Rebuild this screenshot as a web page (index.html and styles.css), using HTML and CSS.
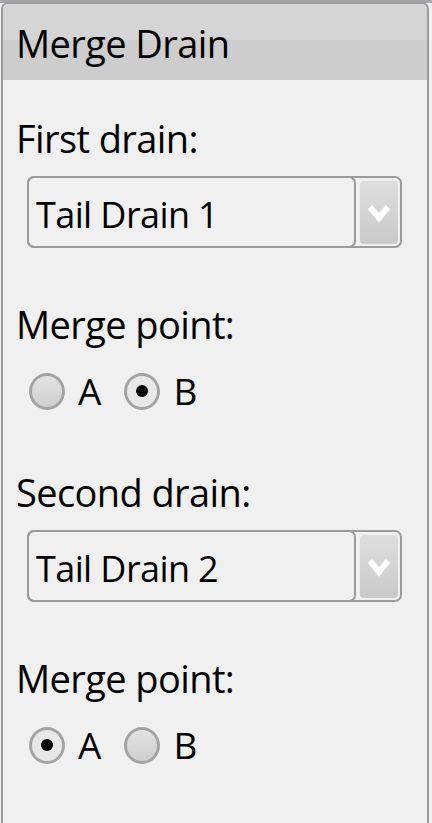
FILE: index.html
```html
<!DOCTYPE html>
<html>
<head>
<meta charset="utf-8">
<link rel="stylesheet" href="styles.css">
</head>
<body>
<div class="topbar"></div>
<div class="panel">
  <div class="header">Merge Drain</div>
  <div class="content">
    <div class="group">
      <div class="label">First drain:</div>
      <div class="combo">
        <div class="field">Tail Drain 1</div>
        <div class="drop"><svg class="chev" viewBox="0 0 24 20"><path d="M3 4 L12 15 L21 4" fill="none" stroke="#ffffff" stroke-width="6"/></svg></div>
      </div>
      <div class="label label-merge">Merge point:</div>
      <div class="radios">
        <div class="radio"><span class="dot"></span><span class="rlabel">A</span></div>
        <div class="radio checked"><span class="dot"></span><span class="rlabel">B</span></div>
      </div>
    </div>
    <div class="group group-second">
      <div class="label">Second drain:</div>
      <div class="combo">
        <div class="field">Tail Drain 2</div>
        <div class="drop"><svg class="chev" viewBox="0 0 24 20"><path d="M3 4 L12 15 L21 4" fill="none" stroke="#ffffff" stroke-width="6"/></svg></div>
      </div>
      <div class="label label-merge">Merge point:</div>
      <div class="radios">
        <div class="radio checked"><span class="dot"></span><span class="rlabel">A</span></div>
        <div class="radio"><span class="dot"></span><span class="rlabel">B</span></div>
      </div>
    </div>
  </div>
</div>
</body>
</html>
```
FILE: styles.css
```css
html, body {
  margin: 0;
  padding: 0;
}
body {
  background: #f0f0f0;
  font-family: "Open Sans", "Noto Sans", sans-serif;
  color: #000;
  width: 432px;
  height: 823px;
  overflow: hidden;
}
.topbar {
  height: 3px;
  background: #a1a7ad;
}
.panel {
  margin: -1px 3px 0 1px;
  height: 830px;
  border: 2px solid #9a9a9a;
  border-bottom: none;
  border-radius: 7px 7px 0 0;
  background: #f0f0f0;
  box-sizing: border-box;
}
.header {
  height: 76px;
  box-sizing: border-box;
  padding: 3px 0 0 13px;
  background: linear-gradient(#d5d5d5 0, #d5d5d5 48%, #cdcdcd 48%, #cdcdcd 100%);
  border-radius: 5px 5px 0 0;
  font-size: 38px;
  line-height: 73px;
  letter-spacing: -0.6px;
}
.content {
  padding: 0 25px 0 13px;
}
.group {
  display: flex;
  flex-direction: column;
}
.group-second {
  margin-top: 23px;
}
.label {
  font-size: 38px;
  letter-spacing: -0.6px;
  line-height: 52px;
  margin-top: 32px;
}
.label-merge {
  margin-top: 50px;
}
.combo {
  margin: 12px 0 0 11px;
  display: flex;
  height: 72px;
  box-sizing: border-box;
  border: 2px solid #9b9b9b;
  border-radius: 7px;
}
.field {
  flex: 1;
  margin: -2px 0 -2px -2px;
  border: 2px solid #9b9b9b;
  border-radius: 7px;
  font-size: 36px;
  letter-spacing: -0.6px;
  line-height: 60px;
  padding: 7px 0 0 7px;
  box-sizing: border-box;
}
.drop {
  flex: none;
  width: 38px;
  margin: 3px 2px 2px 4px;
  border-radius: 4px;
  background: linear-gradient(#dedede, #c9c9c9);
  display: flex;
  align-items: center;
  justify-content: center;
}
.chev {
  flex: none;
  width: 24px;
  height: 20px;
  display: block;
}
.radios {
  display: flex;
  gap: 23px;
  margin: 21px 0 0 13px;
}
.radio {
  display: flex;
  align-items: center;
  gap: 13px;
}
.dot {
  width: 30px;
  height: 31px;
  border: 3px solid #a3a3a3;
  border-radius: 50%;
  background: linear-gradient(#e2e2e2, #cfcfcf);
  display: flex;
  align-items: center;
  justify-content: center;
}
.checked .dot {
  background: #e8e8e8;
}
.checked .dot::after {
  content: "";
  width: 12px;
  height: 12px;
  border-radius: 50%;
  background: #000;
}
.rlabel {
  font-size: 37px;
  line-height: 40px;
}
```
